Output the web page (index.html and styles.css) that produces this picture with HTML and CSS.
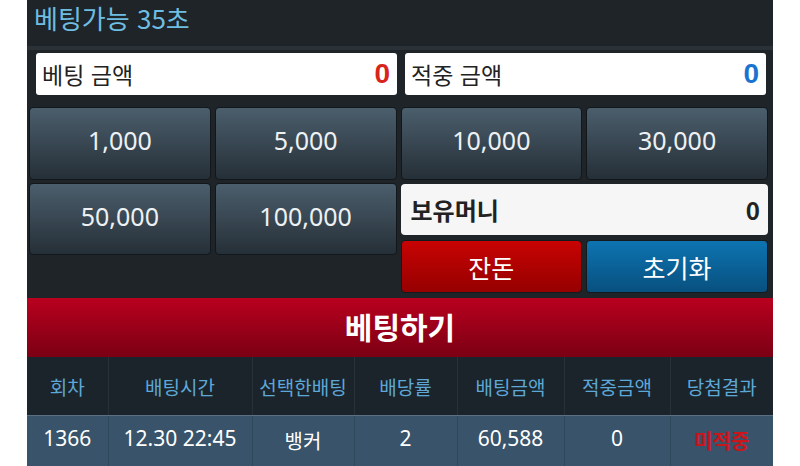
FILE: index.html
```html
<!DOCTYPE html>
<html lang="ko">
<head>
<meta charset="utf-8">
<link rel="stylesheet" href="styles.css">
</head>
<body>
<div class="panel">
  <div class="head"><span class="title">베팅가능 35초</span></div>
  <div class="amounts">
    <div class="amount-box"><span class="label">베팅 금액</span><span class="val red">0</span></div>
    <div class="amount-box"><span class="label">적중 금액</span><span class="val blue">0</span></div>
  </div>
  <div class="pad">
    <div class="chip">1,000</div>
    <div class="chip">5,000</div>
    <div class="chip">10,000</div>
    <div class="chip">30,000</div>
    <div class="chip chip2">50,000</div>
    <div class="chip chip2">100,000</div>
    <div class="side">
      <div class="money"><span>보유머니</span><span>0</span></div>
      <div class="actions">
        <div class="act act-red">잔돈</div>
        <div class="act act-blue">초기화</div>
      </div>
    </div>
  </div>
  <div class="bet">베팅하기</div>
  <table class="hist">
    <colgroup>
      <col class="c1"><col class="c2"><col class="c3"><col class="c4"><col class="c5"><col class="c6"><col class="c7">
    </colgroup>
    <thead>
      <tr><th>회차</th><th>배팅시간</th><th>선택한배팅</th><th>배당률</th><th>배팅금액</th><th>적중금액</th><th>당첨결과</th></tr>
    </thead>
    <tbody>
      <tr><td>1366</td><td>12.30 22:45</td><td class="kr">뱅커</td><td>2</td><td>60,588</td><td>0</td><td class="miss">미적중</td></tr>
    </tbody>
  </table>
</div>
</body>
</html>
```
FILE: styles.css
```css
html, body {
  margin: 0;
  padding: 0;
  background: #ffffff;
  overflow: hidden;
}
body {
  font-family: "Noto Sans", "Noto Sans CJK KR", sans-serif;
}
.panel {
  width: 746px;
  margin-left: 27px;
  background: #1e2428;
  height: 466px;
}
.head {
  border-bottom: 4px solid #2b3237;
  box-sizing: border-box;
  height: 50px;
  padding-left: 7px;
}
.title {
  display: block;
  color: #6ebde2;
  font-size: 26px;
  line-height: 35px;
  font-family: "Noto Sans CJK KR", sans-serif;
}
.amounts {
  display: flex;
  gap: 8px;
  padding: 3px 7px 0 9px;
  height: 57px;
  box-sizing: border-box;
}
.amount-box {
  flex: 1;
  height: 42px;
  background: #ffffff;
  border-radius: 3px;
  display: flex;
  align-items: center;
  justify-content: space-between;
  padding: 0 7px 0 6px;
}
.label {
  font-family: "Noto Sans CJK KR", sans-serif;
  font-size: 23px;
  color: #222;
  line-height: 42px;
}
.val {
  font-size: 28px;
  font-weight: bold;
  font-family: "Liberation Sans", sans-serif;
}
.red { color: #d8241a; }
.blue { color: #1b73d1; }
.pad {
  display: grid;
  grid-template-columns: repeat(4, 1fr);
  grid-template-rows: 73px 115px;
  column-gap: 4px;
  row-gap: 3px;
  padding: 0 5px 0 2px;
}
.chip {
  background: linear-gradient(#4b5e6c, #252f37);
  border: 1px solid #12171b;
  border-radius: 4px;
  color: #eef1f3;
  font-size: 25px;
  display: flex;
  align-items: center;
  justify-content: center;
  box-sizing: border-box;
  padding-bottom: 7px;
}
.chip2 {
  height: 72px;
}
.side {
  grid-column: 3 / 5;
  display: flex;
  flex-direction: column;
  gap: 5px;
  padding-top: 1px;
}
.money {
  height: 51px;
  background: #f6f6f6;
  border-radius: 4px;
  display: flex;
  align-items: center;
  justify-content: space-between;
  padding: 0 8px 0 10px;
  font-size: 24px;
  font-weight: bold;
  color: #222;
  font-family: "Noto Sans CJK KR", sans-serif;
}
.actions {
  display: grid;
  grid-template-columns: 1fr 1fr;
  gap: 4px;
  height: 53px;
}
.act {
  border-radius: 4px;
  color: #ffffff;
  font-size: 25px;
  display: flex;
  align-items: center;
  justify-content: center;
  font-family: "Noto Sans CJK KR", sans-serif;
  border: 1px solid #14191c;
}
.act-red {
  background: linear-gradient(#c80303, #960000);
}
.act-blue {
  background: linear-gradient(#0d74b1, #08507f);
}
.bet {
  height: 59px;
  background: linear-gradient(#b9001f, #7b0013);
  color: #ffffff;
  font-size: 30px;
  font-weight: bold;
  display: flex;
  align-items: center;
  justify-content: center;
  font-family: "Noto Sans CJK KR", sans-serif;
  padding-bottom: 4px;
  box-sizing: border-box;
}
.hist {
  width: 746px;
  border-collapse: collapse;
  table-layout: fixed;
}
.c1 { width: 81px; }
.c2 { width: 144px; }
.c3 { width: 102px; }
.c4 { width: 103px; }
.c5 { width: 107px; }
.c6 { width: 106px; }
.c7 { width: 103px; }
.hist th {
  height: 58px;
  background: #1b242b;
  color: #5ea8d7;
  font-weight: normal;
  font-size: 19px;
  border-left: 1px solid #26313a;
  border-bottom: 1px solid #5b7083;
  padding: 0;
  font-family: "Noto Sans CJK KR", sans-serif;
}
.hist th:first-child, .hist td:first-child { border-left: none; }
.hist td {
  height: 52px;
  background: #38536a;
  color: #ffffff;
  font-size: 21px;
  text-align: center;
  vertical-align: top;
  line-height: 44px;
  border-left: 1px solid #2e475b;
  padding: 0;
}
.hist td.kr {
  font-family: "Noto Sans CJK KR", sans-serif;
  font-size: 20px;
  line-height: 50px;
}
.hist td.miss {
  color: #c8161b;
  font-weight: bold;
  font-size: 20px;
  font-family: "Noto Sans CJK KR", sans-serif;
  line-height: 50px;
}
```
